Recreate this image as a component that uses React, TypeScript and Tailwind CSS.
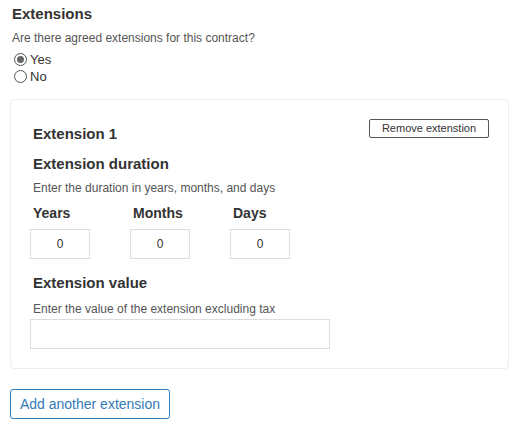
import { useState } from "react";

function Radio({ label, checked, onClick }: { label: string; checked: boolean; onClick: () => void }) {
  return (
    <label onClick={onClick} className="flex items-center h-[17px] cursor-pointer">
      <span className="ml-[4px] w-[13px] h-[13px] rounded-full border border-[#555] flex items-center justify-center bg-white">
        {checked && <span className="w-[7px] h-[7px] rounded-full bg-[#666]" />}
      </span>
      <span className="ml-[3px] text-[13px] text-[#333]">{label}</span>
    </label>
  );
}

function SmallInput({ label }: { label: string }) {
  return (
    <div className="w-[100px] flex flex-col">
      <span className="pl-[3px] text-[14px] font-bold text-[#333] leading-[20px]">{label}</span>
      <input
        defaultValue="0"
        className="mt-[6px] w-[60px] h-[30px] border border-[#ddd] text-center text-[12px] text-[#333] outline-none"
      />
    </div>
  );
}

export default function App() {
  const [agreed, setAgreed] = useState(true);

  return (
    <div className="w-[524px] h-[424px] bg-white px-[10px] pt-[4px] font-['Liberation_Sans',Arial,sans-serif] text-[#333]">
      <h2 className="pl-[2px] text-[15px] font-bold leading-[20px]">Extensions</h2>
      <p className="pl-[2px] mt-[7px] text-[12px] text-[#555] leading-[14px]">
        Are there agreed extensions for this contract?
      </p>
      <div className="mt-[6px] flex flex-col">
        <Radio label="Yes" checked={agreed} onClick={() => setAgreed(true)} />
        <Radio label="No" checked={!agreed} onClick={() => setAgreed(false)} />
      </div>

      <section className="mt-[14px] w-[499px] h-[270px] border border-[#eee] rounded-[4px] pl-[19px] pr-[19px] pt-[19px]">
        <div className="flex justify-between items-start">
          <h3 className="pl-[3px] mt-[5px] text-[15px] font-bold leading-[20px]">Extension 1</h3>
          <button className="w-[120px] h-[19px] border border-[#555] rounded-[2px] text-[11px] text-[#333] leading-none bg-white">
            Remove extenstion
          </button>
        </div>
        <h4 className="pl-[3px] mt-[10px] text-[15px] font-bold leading-[20px]">Extension duration</h4>
        <p className="pl-[3px] mt-[7px] text-[12px] text-[#555] leading-[14px]">
          Enter the duration in years, months, and days
        </p>
        <div className="mt-[8px] flex">
          <SmallInput label="Years" />
          <SmallInput label="Months" />
          <SmallInput label="Days" />
        </div>
        <h4 className="pl-[3px] mt-[14px] text-[15px] font-bold leading-[20px]">Extension value</h4>
        <p className="pl-[3px] mt-[9px] text-[12px] text-[#555] leading-[14px]">
          Enter the value of the extension excluding tax
        </p>
        <input className="mt-[3px] w-[300px] h-[30px] border border-[#ddd] outline-none" />
      </section>

      <button className="mt-[20px] w-[160px] h-[30px] border border-[#337ab7] rounded-[3px] text-[14px] text-[#337ab7] bg-white">
        Add another extension
      </button>
    </div>
  );
}
